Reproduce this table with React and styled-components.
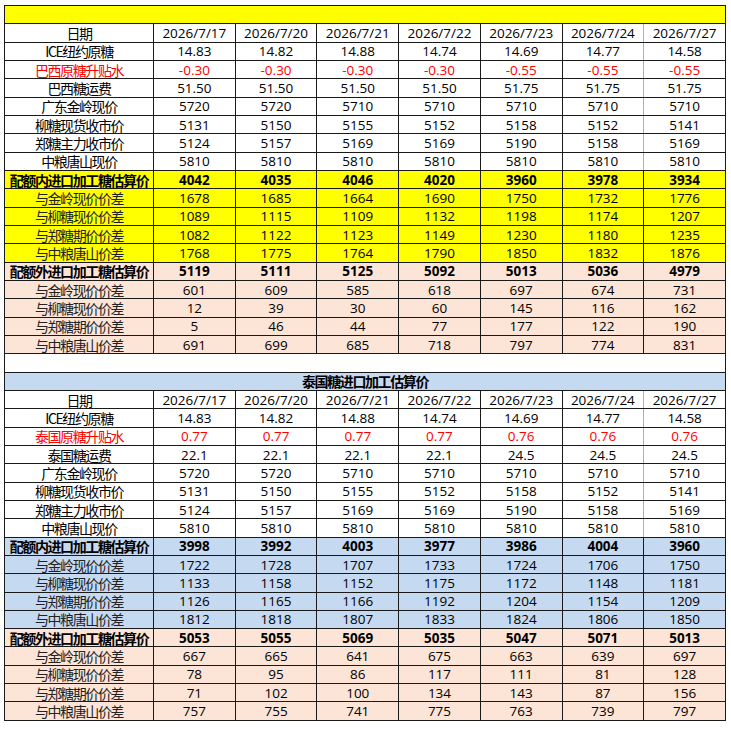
import React from 'react';
import styled, { createGlobalStyle } from 'styled-components';

const Global = createGlobalStyle`
  html, body { margin: 0; padding: 0; background: #fff; }
  body { font-family: "Open Sans", "Noto Sans CJK SC", sans-serif; }
`;

const Page = styled.div`
  padding: 5px 0 0 4px;
`;

const Sheet = styled.table`
  border-collapse: collapse;
  table-layout: fixed;
  width: 722px;
  font-size: 13.5px;
  color: #000;
`;

const Row = styled.tr`
  height: 18.33px;
  background: ${p => p.$bg || '#fff'};
`;

const Cell = styled.td`
  border: 1px solid #1a1a1a;
  padding: 0;
  text-align: center;
  line-height: 16px;
  white-space: nowrap;
  overflow: hidden;
  font-weight: ${p => (p.$bold ? 700 : 400)};
  color: ${p => (p.$red ? '#ff0000' : '#000')};
  ${p => p.$soft && 'border-right-color: #b0b0b0;'}
`;

const Label = styled(Cell)`
  font-family: "Noto Sans CJK SC", "Open Sans", sans-serif;
  font-size: 14px;
  letter-spacing: -1.4px;
  color: ${p => (p.$red ? '#ff0000' : p.$dim ? '#222' : '#000')};
`;

const TitleCell = styled.td`
  border: 1px solid #1a1a1a;
  padding: 0;
  text-align: center;
  font-family: "Noto Sans CJK SC", sans-serif;
  font-size: 14px;
  font-weight: 700;
  line-height: 16px;
  letter-spacing: -1.4px;
`;

const SpacerCell = styled.td`
  border-left: 1px solid #1a1a1a;
  border-right: 1px solid #1a1a1a;
  padding: 0;
`;

const YELLOW = '#ffff00';
const PINK = '#fce4d6';
const BLUE = '#c5d9f1';

const dates = ['2026/7/17', '2026/7/20', '2026/7/21', '2026/7/22', '2026/7/23', '2026/7/24', '2026/7/27'];

const common = {
  ice: ['14.83', '14.82', '14.88', '14.74', '14.69', '14.77', '14.58'],
  jl: ['5720', '5720', '5710', '5710', '5710', '5710', '5710'],
  lt: ['5131', '5150', '5155', '5152', '5158', '5152', '5141'],
  zt: ['5124', '5157', '5169', '5169', '5190', '5158', '5169'],
  zl: ['5810', '5810', '5810', '5810', '5810', '5810', '5810'],
};

const buildRows = (origin, premium, freight, inQuota, outQuota) => [
  { label: 'ICE纽约原糖', v: common.ice },
  { label: `${origin}原糖升贴水`, v: premium, red: true },
  { label: `${origin}糖运费`, v: freight },
  { label: '广东金岭现价', v: common.jl },
  { label: '柳糖现货收市价', v: common.lt },
  { label: '郑糖主力收市价', v: common.zt },
  { label: '中粮唐山现价', v: common.zl },
  { label: '配额内进口加工糖估算价', v: inQuota.total, bold: true, bg: inQuota.bg },
  { label: '与金岭现价价差', v: inQuota.d[0], bg: inQuota.bg, dim: true },
  { label: '与柳糖现价价差', v: inQuota.d[1], bg: inQuota.bg, dim: true },
  { label: '与郑糖期价价差', v: inQuota.d[2], bg: inQuota.bg, dim: true },
  { label: '与中粮唐山价差', v: inQuota.d[3], bg: inQuota.bg, dim: true },
  { label: '配额外进口加工糖估算价', v: outQuota.total, bold: true, bg: PINK },
  { label: '与金岭现价价差', v: outQuota.d[0], bg: PINK, dim: true },
  { label: '与柳糖现价价差', v: outQuota.d[1], bg: PINK, dim: true },
  { label: '与郑糖期价价差', v: outQuota.d[2], bg: PINK, dim: true },
  { label: '与中粮唐山价差', v: outQuota.d[3], bg: PINK, dim: true },
];

const brazil = buildRows(
  '巴西',
  ['-0.30', '-0.30', '-0.30', '-0.30', '-0.55', '-0.55', '-0.55'],
  ['51.50', '51.50', '51.50', '51.50', '51.75', '51.75', '51.75'],
  {
    bg: YELLOW,
    total: ['4042', '4035', '4046', '4020', '3960', '3978', '3934'],
    d: [
      ['1678', '1685', '1664', '1690', '1750', '1732', '1776'],
      ['1089', '1115', '1109', '1132', '1198', '1174', '1207'],
      ['1082', '1122', '1123', '1149', '1230', '1180', '1235'],
      ['1768', '1775', '1764', '1790', '1850', '1832', '1876'],
    ],
  },
  {
    total: ['5119', '5111', '5125', '5092', '5013', '5036', '4979'],
    d: [
      ['601', '609', '585', '618', '697', '674', '731'],
      ['12', '39', '30', '60', '145', '116', '162'],
      ['5', '46', '44', '77', '177', '122', '190'],
      ['691', '699', '685', '718', '797', '774', '831'],
    ],
  }
);

const thai = buildRows(
  '泰国',
  ['0.77', '0.77', '0.77', '0.77', '0.76', '0.76', '0.76'],
  ['22.1', '22.1', '22.1', '22.1', '24.5', '24.5', '24.5'],
  {
    bg: BLUE,
    total: ['3998', '3992', '4003', '3977', '3986', '4004', '3960'],
    d: [
      ['1722', '1728', '1707', '1733', '1724', '1706', '1750'],
      ['1133', '1158', '1152', '1175', '1172', '1148', '1181'],
      ['1126', '1165', '1166', '1192', '1204', '1154', '1209'],
      ['1812', '1818', '1807', '1833', '1824', '1806', '1850'],
    ],
  },
  {
    total: ['5053', '5055', '5069', '5035', '5047', '5071', '5013'],
    d: [
      ['667', '665', '641', '675', '663', '639', '697'],
      ['78', '95', '86', '117', '111', '81', '128'],
      ['71', '102', '100', '134', '143', '87', '156'],
      ['757', '755', '741', '775', '763', '739', '797'],
    ],
  }
);

function Section({ title, titleBg, rows }) {
  return (
    <>
      <Row $bg={titleBg}>
        <TitleCell colSpan={8}>{title}</TitleCell>
      </Row>
      <Row>
        <Label>日期</Label>
        {dates.map((d, i) => (
          <Cell key={d} $soft={i === 5}>{d}</Cell>
        ))}
      </Row>
      {rows.map((r, idx) => (
        <Row key={idx} $bg={r.bg}>
          <Label $bold={r.bold} $red={r.red} $dim={r.dim}>{r.label}</Label>
          {r.v.map((v, i) => (
            <Cell key={i} $bold={r.bold} $red={r.red} $soft={i === 5 && !r.bg}>{v}</Cell>
          ))}
        </Row>
      ))}
    </>
  );
}

export default function App() {
  return (
    <Page>
      <Global />
      <Sheet>
        <colgroup>
          <col style={{ width: 149 }} />
          {dates.map(d => <col key={d} />)}
        </colgroup>
        <tbody>
          <Section title="" titleBg={YELLOW} rows={brazil} />
          <Row>
            <SpacerCell colSpan={8} />
          </Row>
          <Section title="泰国糖进口加工估算价" titleBg={BLUE} rows={thai} />
        </tbody>
      </Sheet>
    </Page>
  );
}
